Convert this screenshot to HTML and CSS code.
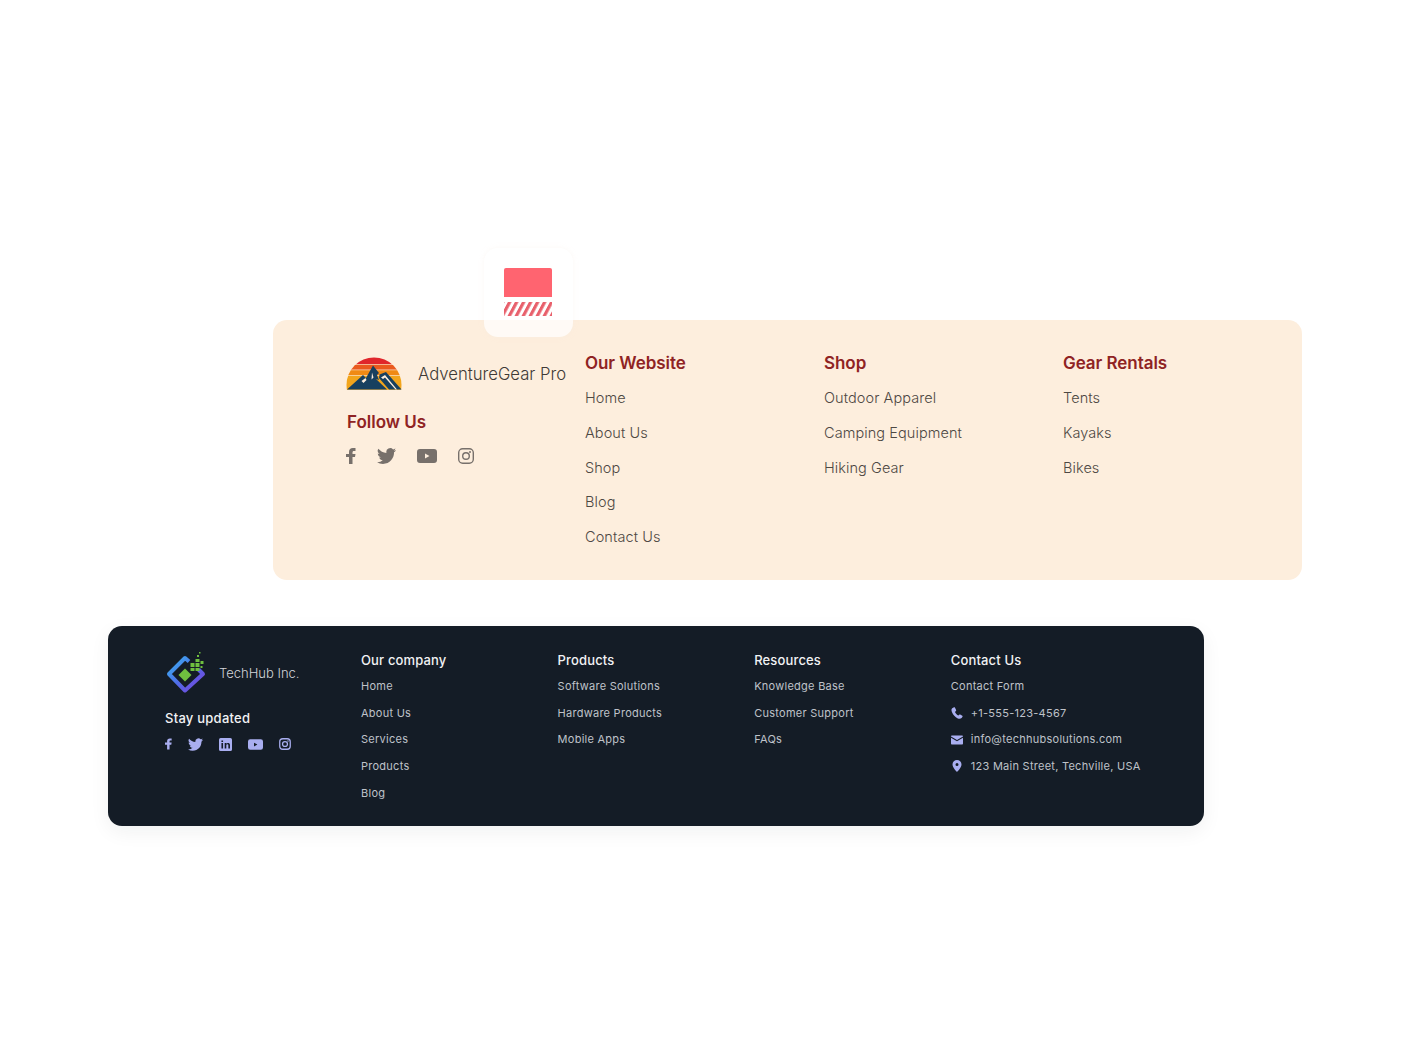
FILE: index.html
```html
<!DOCTYPE html>
<html lang="en">

<head>
   <meta charset="UTF-8">
   <meta name="viewport" content="width=device-width, initial-scale=1.0">
   <title>Footers</title>
   <link rel="stylesheet" href="styles.css">
</head>

<body>
   <div class="tile">
      <svg width="48" height="48" viewBox="0 0 48 48">
         <defs>
            <pattern id="hatch" width="7" height="14" patternUnits="userSpaceOnUse" patternTransform="translate(1 0) skewX(-28)">
               <rect width="3.6" height="14" fill="#e8606c"></rect>
            </pattern>
         </defs>
         <path d="M2 0h44a2 2 0 0 1 2 2v27H0V2a2 2 0 0 1 2-2z" fill="#ff6470"></path>
         <rect y="34" width="48" height="14" fill="url(#hatch)"></rect>
      </svg>
   </div>

   <footer class="light">
      <div class="brand-col">
         <div class="brand">
            <svg width="56" height="36" viewBox="0 0 56 36">
               <defs>
                  <clipPath id="sun"><circle cx="28" cy="29" r="27.500"></circle></clipPath>
               </defs>
               <g clip-path="url(#sun)">
                  <rect width="56" height="8" fill="#e0262b"></rect>
                  <rect y="8.600" width="56" height="5" fill="#ea5a1e"></rect>
                  <rect y="14.200" width="56" height="5" fill="#f08a14"></rect>
                  <rect y="19.800" width="56" height="14" fill="#f2a51c"></rect>
               </g>
               <path d="M1 33.500 17 19l3 3L27 9.500 33 17l-2 2 2 5-3-1 11 10.500z" fill="#17405f"></path>
               <path d="M33.500 18.500 40 16l15.500 17.500H43L33 22z" fill="#17405f"></path>
               <path d="M35 21.500 39 19l12 14.500h-1.500L39 21.500l-2 1.500zM15.500 25l4-3 1 2-3 3zM26 16.500l1.500 5-2 2z" fill="#fdeedd"></path>
            </svg>
            <span class="brand-name">AdventureGear Pro</span>
         </div>
         <h3 class="follow">Follow Us</h3>
         <div class="socials">
            <svg class="ic-f" width="10" height="16" viewBox="0 0 10 16"><path d="M3 16V9H0V6h3V4c0-2.600 1.500-4 3.800-4H9.500v3H8C6.800 3 6.500 3.600 6.500 4.500V6h3l-.5 3H6.500v7z"></path></svg>
            <svg width="19" height="16" viewBox="0 0 24 20"><path d="M24 2.400c-.9.400-1.800.7-2.800.8 1-.6 1.800-1.600 2.200-2.700-1 .6-2 1-3.100 1.200A4.900 4.900 0 0 0 11.900 6.100C7.800 5.900 4.200 3.900 1.700.9A4.900 4.900 0 0 0 3.200 7.500c-.8 0-1.600-.2-2.200-.6 0 2.400 1.700 4.400 3.900 4.900-.7.200-1.500.2-2.200.1.600 2 2.400 3.400 4.600 3.400A9.900 9.900 0 0 1 0 17.800 13.900 13.900 0 0 0 7.500 20c9.100 0 14.300-7.700 14-14.600 1-.7 1.800-1.600 2.500-3z"></path></svg>
            <svg width="20" height="14" viewBox="0 0 20 14"><path fill-rule="evenodd" d="M3 0h14a3 3 0 0 1 3 3v8a3 3 0 0 1-3 3H3a3 3 0 0 1-3-3V3a3 3 0 0 1 3-3zM8 4.500v5L12.500 7z"></path></svg>
            <svg width="16" height="16" viewBox="0 0 16 16"><rect x=".7" y=".7" width="14.600" height="14.600" rx="4" fill="none" stroke-width="1.400"></rect><circle cx="8" cy="8" r="3.300" fill="none" stroke-width="1.400"></circle><circle cx="12" cy="4" r="1"></circle></svg>
         </div>
      </div>
      <div class="col">
         <h3>Our Website</h3>
         <a>Home</a>
         <a>About Us</a>
         <a>Shop</a>
         <a>Blog</a>
         <a>Contact Us</a>
      </div>
      <div class="col">
         <h3>Shop</h3>
         <a>Outdoor Apparel</a>
         <a>Camping Equipment</a>
         <a>Hiking Gear</a>
      </div>
      <div class="col">
         <h3>Gear Rentals</h3>
         <a>Tents</a>
         <a>Kayaks</a>
         <a>Bikes</a>
      </div>
   </footer>

   <footer class="dark">
      <div class="brand-col">
         <div class="brand">
            <svg width="42" height="42" viewBox="0 0 42 42">
               <defs>
                  <linearGradient id="rim" x1="0" y1="0" x2="1" y2="1">
                     <stop offset="0" stop-color="#38b6f0"></stop>
                     <stop offset=".5" stop-color="#4f6de8"></stop>
                     <stop offset="1" stop-color="#7c3fd8"></stop>
                  </linearGradient>
               </defs>
               <path d="M24 9.500 20 6 4 22 20 38.500 38 22 33.500 17.500" fill="none" stroke="url(#rim)" stroke-width="4" stroke-linejoin="round"></path>
               <path d="M20 16.500l6.500 6.500-6.500 6.500-6.500-6.500z" fill="#6fbf3f"></path>
               <path d="M25.500 11h4v4h-4zM30.500 11h4v4h-4zM25.500 16h4v3h-4zM30.500 16h4v3h-4zM30.500 7h4v3h-4zM35.500 9h3v3h-3zM35.500 14h2v2h-2zM32 3h2v2h-2zM34 0h1.500v1.500H34z" fill="#6fbf3f"></path>
            </svg>
            <span class="brand-name">TechHub Inc.</span>
         </div>
         <h3 class="follow">Stay updated</h3>
         <div class="socials">
            <svg width="7" height="12" viewBox="0 0 10 16"><path d="M3 16V9H0V6h3V4c0-2.600 1.500-4 3.800-4H9.500v3H8C6.800 3 6.500 3.600 6.500 4.500V6h3l-.5 3H6.500v7z"></path></svg>
            <svg width="15" height="13" viewBox="0 0 24 20"><path d="M24 2.400c-.9.400-1.800.7-2.800.8 1-.6 1.800-1.600 2.200-2.700-1 .6-2 1-3.100 1.200A4.900 4.900 0 0 0 11.900 6.100C7.800 5.900 4.200 3.900 1.700.9A4.900 4.900 0 0 0 3.200 7.500c-.8 0-1.600-.2-2.200-.6 0 2.400 1.700 4.400 3.900 4.900-.7.200-1.500.2-2.200.1.600 2 2.400 3.400 4.600 3.400A9.900 9.900 0 0 1 0 17.800 13.900 13.900 0 0 0 7.500 20c9.100 0 14.300-7.700 14-14.600 1-.7 1.800-1.600 2.500-3z"></path></svg>
            <svg width="13" height="13" viewBox="0 0 16 16"><path fill-rule="evenodd" d="M2 0h12a2 2 0 0 1 2 2v12a2 2 0 0 1-2 2H2a2 2 0 0 1-2-2V2a2 2 0 0 1 2-2zM3 6v7h2V6zM3 3v2h2V3zM7 6v7h2V9c0-1.600 2.500-1.700 2.500 0v4h2V8.500C13.500 5.700 10 5.800 9 7V6z"></path></svg>
            <svg width="15" height="11" viewBox="0 0 20 14"><path fill-rule="evenodd" d="M3 0h14a3 3 0 0 1 3 3v8a3 3 0 0 1-3 3H3a3 3 0 0 1-3-3V3a3 3 0 0 1 3-3zM8 4.500v5L12.500 7z"></path></svg>
            <svg width="12" height="12" viewBox="0 0 16 16"><rect x="1" y="1" width="14" height="14" rx="4" fill="none" stroke-width="1.700"></rect><circle cx="8" cy="8" r="3.300" fill="none" stroke-width="1.700"></circle><circle cx="12" cy="4" r="1"></circle></svg>
         </div>
      </div>
      <div class="col">
         <h3>Our company</h3>
         <a>Home</a>
         <a>About Us</a>
         <a>Services</a>
         <a>Products</a>
         <a>Blog</a>
      </div>
      <div class="col">
         <h3>Products</h3>
         <a>Software Solutions</a>
         <a>Hardware Products</a>
         <a>Mobile Apps</a>
      </div>
      <div class="col">
         <h3>Resources</h3>
         <a>Knowledge Base</a>
         <a>Customer Support</a>
         <a>FAQs</a>
      </div>
      <div class="col">
         <h3>Contact Us</h3>
         <a>Contact Form</a>
         <a class="contact"><svg width="12" height="12" viewBox="0 0 12 12"><path d="M3 .3 1.200 1.300C.3 2 .2 3.500 1 5.200c1.200 2.700 3 4.700 5.800 6.200 1.500.7 2.900.5 3.800-.4l.9-1.300c.2-.4.100-.7-.2-.9L9.200 7.500c-.4-.2-.7-.1-1 .2l-.8.9C6 8 4.500 6.300 4 5l.9-.9c.3-.3.3-.6.200-1L3.900.6C3.700.2 3.300.1 3 .3z"></path></svg>+1-555-123-4567</a>
         <a class="contact"><svg width="12" height="12" viewBox="0 0 12 12"><path d="M1 1.500h10c.5 0 1 .4 1 1L6 6 0 2.500c0-.6.500-1 1-1zM0 3.800 6 7.200l6-3.400v5.700c0 .6-.5 1-1 1H1c-.5 0-1-.4-1-1z"></path></svg>info@techhubsolutions.com</a>
         <a class="contact"><svg width="12" height="12" viewBox="0 0 12 12"><path fill-rule="evenodd" d="M6 0a4.500 4.500 0 0 1 4.500 4.500C10.500 7.500 6 12 6 12S1.500 7.500 1.500 4.500A4.500 4.500 0 0 1 6 0zm0 3a1.500 1.500 0 1 0 0 3 1.500 1.500 0 0 0 0-3z"></path></svg>123 Main Street, Techville, USA</a>
      </div>
   </footer>
</body>

</html>
```

FILE: styles.css
```css
* {
   margin: 0;
   padding: 0;
   box-sizing: border-box;
}

body {
   background: #fff;
   font-family: "Inter", "Liberation Sans", sans-serif;
   position: relative;
   min-height: 1050px;
   padding-top: 320px;
}

a {
   display: block;
}

.tile {
   position: absolute;
   left: 484px;
   top: 248px;
   width: 89px;
   height: 89px;
   border-radius: 14px;
   background: rgba(255, 255, 255, 0.72);
   box-shadow: 0 0 5px rgba(245, 235, 225, 0.35);
   display: flex;
   align-items: center;
   justify-content: center;
}

.tile svg {
   margin: -1px 0 0 -1px;
}

footer {
   display: flex;
}

.brand {
   display: flex;
   align-items: center;
}

/* top footer */
.light {
   width: 1029px;
   height: 260px;
   margin-left: 273px;
   padding: 32px 0 0 74px;
   background: #fdeedd;
   border-radius: 14px;
   color: #6b6560;
}

.light .brand-col {
   width: 238px;
   flex-shrink: 0;
}

.light .brand {
   margin-left: -1px;
   height: 36px;
   margin-top: 4px;
}

.light .brand-name {
   margin-left: 16px;
   font-size: 16.700px;
   font-weight: 300;
   color: #3f3a36;
   white-space: nowrap;
}

.light .follow {
   margin-top: 19px;
   color: #8f2323;
   font-size: 17px;
   line-height: 22px;
   font-weight: 600;
}

.light .socials {
   display: flex;
   align-items: center;
   gap: 21px;
   margin-top: 14px;
   height: 18px;
   margin-left: -1px;
}

.light .socials svg {
   fill: #77706b;
   stroke: #77706b;
   stroke-width: 0;
   flex-shrink: 0;
}

.light .col {
   width: 239px;
   flex-shrink: 0;
}

.light .col h3 {
   color: #8f2323;
   font-size: 17px;
   line-height: 22px;
   font-weight: 600;
   margin-bottom: 7px;
   letter-spacing: -0.05px;
}

.light .col a {
   font-size: 14.500px;
   font-weight: 300;
   line-height: 34.800px;
   letter-spacing: 0.08px;
   color: #4d4843;
}

/* bottom footer */
.dark {
   width: 1096px;
   height: 200px;
   margin: 46px 0 0 108px;
   padding: 25px 0 0 57px;
   background: #141c26;
   border-radius: 14px;
   box-shadow: 0 6px 20px rgba(20, 28, 38, 0.06);
   color: #c9ccd2;
}

.dark .brand-col {
   width: 196px;
   flex-shrink: 0;
}

.dark .brand {
   height: 42px;
   margin-top: 1px;
}

.dark .brand-name {
   margin-left: 12px;
   font-size: 13px;
   font-weight: 300;
   color: #d2d4d9;
}

.dark .follow {
   margin-top: 15px;
   color: #f1f2f4;
   font-size: 13px;
   line-height: 18px;
   font-weight: 500;
   letter-spacing: 0.25px;
}

.dark .socials {
   display: flex;
   align-items: center;
   gap: 16px;
   margin-top: 10px;
   height: 14px;
}

.dark .socials svg {
   fill: #a9aef0;
   stroke: #a9aef0;
   stroke-width: 0;
   flex-shrink: 0;
}

.dark .col {
   width: 196.600px;
   flex-shrink: 0;
}

.dark .col h3 {
   color: #f1f2f4;
   font-size: 13px;
   line-height: 18px;
   font-weight: 500;
   margin-bottom: 4px;
   letter-spacing: 0.15px;
}

.dark .col a {
   font-size: 11px;
   font-weight: 400;
   line-height: 26.650px;
   letter-spacing: 0.26px;
   color: #bfc2c9;
}

.dark .contact {
   display: flex;
   align-items: center;
   gap: 8px;
   white-space: nowrap;
}

.dark .contact svg {
   fill: #a9aef0;
}
```
